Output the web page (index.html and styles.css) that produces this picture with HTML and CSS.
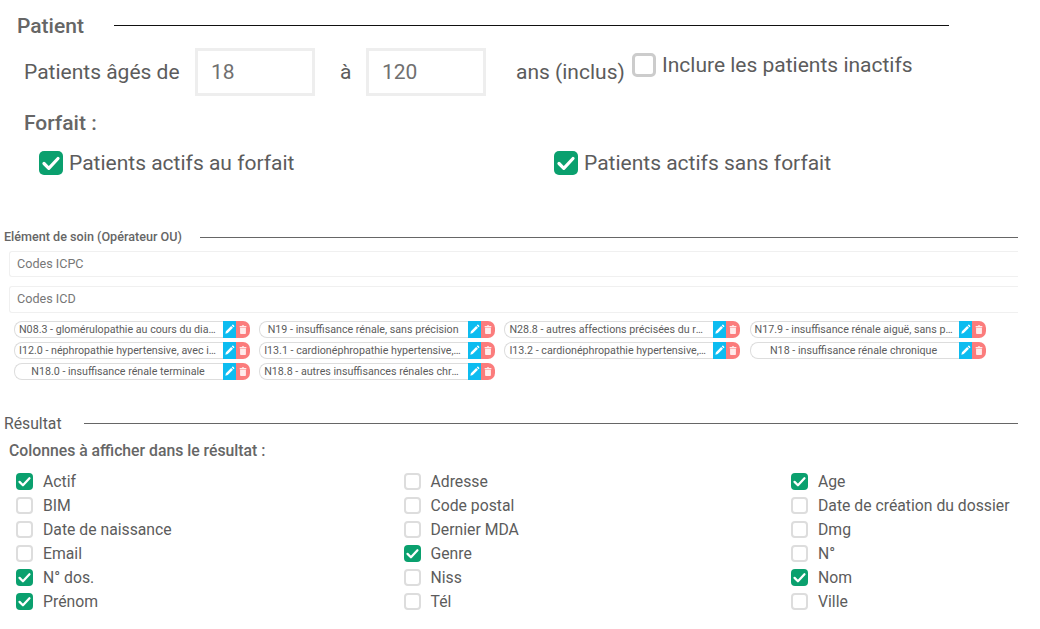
FILE: index.html
```html
<!DOCTYPE html>
<html lang="fr">
<head>
<meta charset="utf-8">
<title>Recherche patient</title>
<link rel="stylesheet" href="styles.css">
</head>
<body>
<svg class="defs" width="0" height="0">
  <symbol id="i-check" viewBox="0 0 24 24"><path d="M5 12.500l4.800 4.800L19 7.500" fill="none" stroke="#fff" stroke-width="3.200" stroke-linecap="round" stroke-linejoin="round"/></symbol>
  <symbol id="i-pen" viewBox="0 0 24 24"><path d="M3 21l1.200-5.200L15.600 4.400l4 4L8.200 19.800zM17 3l1.200-1.200a1.500 1.500 0 0 1 2.100 0l1.900 1.900a1.500 1.500 0 0 1 0 2.100L21 7z" fill="#fff"/></symbol>
  <symbol id="i-trash" viewBox="0 0 24 24"><path d="M4 3.500h5L10 2h4l1 1.500h5v3H4zM5 8h14v13a2 2 0 0 1-2 2H7a2 2 0 0 1-2-2z" fill="#fff" fill-opacity=".85"/></symbol>
</svg>
<section class="patient">
  <div class="head head-lg"><h2>Patient</h2><span class="rule rule-black"></span></div>
  <div class="age-row">
    <span class="age-label">Patients âgés de</span>
    <div class="num-input">18</div>
    <span class="age-to">à</span>
    <div class="num-input">120</div>
    <span class="age-unit">ans (inclus)</span>
    <label class="big-check inactive"><span class="box-lg"></span><span>Inclure les patients inactifs</span></label>
  </div>
  <div class="forfait-title">Forfait :</div>
  <div class="forfait-row">
    <label class="big-check"><span class="box-lg on"><svg><use href="#i-check"/></svg></span><span>Patients actifs au forfait</span></label>
    <label class="big-check"><span class="box-lg on"><svg><use href="#i-check"/></svg></span><span>Patients actifs sans forfait</span></label>
  </div>
</section>

<section class="soin">
  <div class="head head-sm"><h3>Elément de soin (Opérateur OU)</h3><span class="rule"></span></div>
  <div class="code-input">Codes ICPC</div>
  <div class="code-input icd">Codes ICD</div>
  <div class="tags">
    <div class="tag"><span class="tag-text">N08.3 - glomérulopathie au cours du diabète</span><span class="tag-edit"><svg><use href="#i-pen"/></svg></span><span class="tag-del"><svg><use href="#i-trash"/></svg></span></div>
    <div class="tag"><span class="tag-text">N19 - insuffisance rénale, sans précision</span><span class="tag-edit"><svg><use href="#i-pen"/></svg></span><span class="tag-del"><svg><use href="#i-trash"/></svg></span></div>
    <div class="tag"><span class="tag-text">N28.8 - autres affections précisées du rein</span><span class="tag-edit"><svg><use href="#i-pen"/></svg></span><span class="tag-del"><svg><use href="#i-trash"/></svg></span></div>
    <div class="tag"><span class="tag-text">N17.9 - insuffisance rénale aiguë, sans précision</span><span class="tag-edit"><svg><use href="#i-pen"/></svg></span><span class="tag-del"><svg><use href="#i-trash"/></svg></span></div>
    <div class="tag"><span class="tag-text">I12.0 - néphropathie hypertensive, avec insuffisance</span><span class="tag-edit"><svg><use href="#i-pen"/></svg></span><span class="tag-del"><svg><use href="#i-trash"/></svg></span></div>
    <div class="tag"><span class="tag-text">I13.1 - cardionéphropathie hypertensive, avec insuffisance</span><span class="tag-edit"><svg><use href="#i-pen"/></svg></span><span class="tag-del"><svg><use href="#i-trash"/></svg></span></div>
    <div class="tag"><span class="tag-text">I13.2 - cardionéphropathie hypertensive, avec insuffisance</span><span class="tag-edit"><svg><use href="#i-pen"/></svg></span><span class="tag-del"><svg><use href="#i-trash"/></svg></span></div>
    <div class="tag"><span class="tag-text">N18 - insuffisance rénale chronique</span><span class="tag-edit"><svg><use href="#i-pen"/></svg></span><span class="tag-del"><svg><use href="#i-trash"/></svg></span></div>
    <div class="tag"><span class="tag-text">N18.0 - insuffisance rénale terminale</span><span class="tag-edit"><svg><use href="#i-pen"/></svg></span><span class="tag-del"><svg><use href="#i-trash"/></svg></span></div>
    <div class="tag"><span class="tag-text">N18.8 - autres insuffisances rénales chroniques</span><span class="tag-edit"><svg><use href="#i-pen"/></svg></span><span class="tag-del"><svg><use href="#i-trash"/></svg></span></div>
  </div>
</section>

<section class="resultat">
  <div class="head head-md"><h3>Résultat</h3><span class="rule"></span></div>
  <div class="cols-title">Colonnes à afficher dans le résultat :</div>
  <div class="cols">
    <label class="col-item"><span class="box on"><svg><use href="#i-check"/></svg></span>Actif</label>
    <label class="col-item"><span class="box"></span>Adresse</label>
    <label class="col-item"><span class="box on"><svg><use href="#i-check"/></svg></span>Age</label>
    <label class="col-item"><span class="box"></span>BIM</label>
    <label class="col-item"><span class="box"></span>Code postal</label>
    <label class="col-item"><span class="box"></span>Date de création du dossier</label>
    <label class="col-item"><span class="box"></span>Date de naissance</label>
    <label class="col-item"><span class="box"></span>Dernier MDA</label>
    <label class="col-item"><span class="box"></span>Dmg</label>
    <label class="col-item"><span class="box"></span>Email</label>
    <label class="col-item"><span class="box on"><svg><use href="#i-check"/></svg></span>Genre</label>
    <label class="col-item"><span class="box"></span>N°</label>
    <label class="col-item"><span class="box on"><svg><use href="#i-check"/></svg></span>N° dos.</label>
    <label class="col-item"><span class="box"></span>Niss</label>
    <label class="col-item"><span class="box on"><svg><use href="#i-check"/></svg></span>Nom</label>
    <label class="col-item"><span class="box on"><svg><use href="#i-check"/></svg></span>Prénom</label>
    <label class="col-item"><span class="box"></span>Tél</label>
    <label class="col-item"><span class="box"></span>Ville</label>
  </div>
</section>
</body>
</html>
```
FILE: styles.css
```css
* { box-sizing: border-box; }
html, body { margin: 0; padding: 0; background: #fff; }
body { width: 1040px; height: 629px; overflow: hidden; font-family: Roboto, "Liberation Sans", sans-serif; color: #5c5c5c; }
.defs { position: absolute; }
h2, h3 { margin: 0; font-weight: 500; }
svg { display: block; width: 100%; height: 100%; }

.head { display: flex; align-items: center; }
.rule { display: block; height: 1px; background: #666; }

.patient { padding: 14px 0 0 17px; height: 226px; }
.head-lg { height: 24px; }
.head-lg h2 { font-size: 21px; line-height: 24px; width: 97px; color: #666; }
.rule-black { width: 835px; background: #111; margin-top: -2px; }

.age-row { display: flex; align-items: flex-start; margin: 10px 0 0 7px; font-size: 21px; height: 48px; }
.age-label { width: 171px; line-height: 48px; }
.num-input { width: 120px; height: 48px; border: 3px solid #eee; padding-left: 13px; line-height: 42px; color: #707070; }
.age-to { width: 51px; padding-left: 25px; line-height: 48px; }
.age-unit { width: 146px; padding-left: 30px; line-height: 48px; white-space: nowrap; }

.big-check { display: flex; align-items: center; font-size: 21px; }
.box-lg { flex: none; width: 24px; height: 24px; border-radius: 5px; border: 3px solid #ccc; background: #fff; margin-right: 6px; }
.box-lg.on { background: #0aa06e; border: 0; padding: 0; }
.inactive { height: 34px; }

.forfait-title { margin: 15px 0 0 7px; font-size: 21px; font-weight: 500; line-height: 24px; color: #666; }
.forfait-row { display: grid; grid-template-columns: 515px 1fr; margin: 13px 0 0 22px; }
.forfait-row .big-check { height: 30px; }

.soin { padding-left: 4px; height: 187px; }
.head-sm { height: 22px; }
.head-sm h3 { font-size: 12.6px; line-height: 22px; width: 196px; white-space: nowrap; color: #666; }
.head-sm .rule { width: 818px; }
.code-input { margin: 3px 0 0 5px; width: 1009px; height: 26px; border: 1px solid #f0f0f0; border-right: 0; border-radius: 3px 0 0 3px; font-size: 12.6px; line-height: 24px; padding-left: 7px; color: #777; }
.code-input.icd { margin-top: 9px; height: 27px; line-height: 24px; }
.tags { display: grid; grid-template-columns: repeat(4, 245.2px); grid-auto-rows: 21px; margin: 8px 0 0 10px; }
.tag { display: flex; width: 236px; height: 17px; font-size: 10.7px; line-height: 15px; }
.tag-text { flex: none; width: 209px; border: 1px solid #ddd; border-right: 0; border-radius: 8px 0 0 8px; padding: 0 6px 0 4px; text-align: center; white-space: nowrap; overflow: hidden; text-overflow: ellipsis; color: #5c5c5c; }
.tag-edit { flex: none; width: 13px; background: #0dbcf0; padding: 2px 1px; }
.tag-del { flex: none; width: 14px; background: #fb7c7c; border-radius: 0 7px 7px 0; padding: 2px; }

.resultat { padding-left: 4px; }
.head-md { height: 22px; }
.head-md h3 { font-size: 15.75px; font-weight: 400; line-height: 22px; width: 80px; }
.head-md .rule { width: 934px; margin-top: -2px; }
.cols-title { margin: 6px 0 0 5px; font-size: 15.75px; font-weight: 500; line-height: 20px; color: #666; }
.cols { display: grid; grid-template-columns: 387.5px 387.5px 1fr; grid-auto-rows: 24px; margin: 8px 0 0 12px; width: 1020px; }
.col-item { display: flex; align-items: center; font-size: 15.75px; white-space: nowrap; }
.box { flex: none; width: 17px; height: 17px; border-radius: 4px; border: 2px solid #ddd; background: #fff; margin-right: 10px; }
.box.on { background: #0aa06e; border: 0; padding: 0; }
```
